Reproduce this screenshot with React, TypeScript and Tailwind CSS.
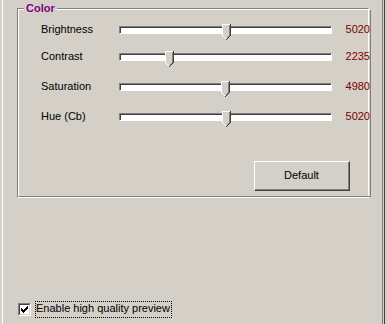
import React from "react";

const rows = [
  { label: "Brightness", value: 5020, mt: "mt-[14px]" },
  { label: "Contrast", value: 2235, mt: "mt-[11px]" },
  { label: "Saturation", value: 4980, mt: "mt-[14px]" },
  { label: "Hue (Cb)", value: 5020, mt: "mt-[14px]" },
];

function Thumb() {
  return (
    <svg width="9" height="16" viewBox="0 0 9 16" shapeRendering="crispEdges">
      <rect x="1" y="1" width="6" height="11" fill="#d4d0c8" />
      <rect x="2" y="12" width="4" height="1" fill="#d4d0c8" />
      <rect x="3" y="13" width="2" height="1" fill="#d4d0c8" />
      <rect x="0" y="0" width="8" height="1" fill="#ffffff" />
      <rect x="0" y="0" width="1" height="12" fill="#ffffff" />
      <rect x="1" y="12" width="1" height="1" fill="#ffffff" />
      <rect x="2" y="13" width="1" height="1" fill="#ffffff" />
      <rect x="3" y="14" width="1" height="1" fill="#ffffff" />
      <rect x="7" y="1" width="1" height="11" fill="#808080" />
      <rect x="6" y="12" width="1" height="1" fill="#808080" />
      <rect x="5" y="13" width="1" height="1" fill="#808080" />
      <rect x="8" y="0" width="1" height="12" fill="#404040" />
      <rect x="7" y="12" width="1" height="1" fill="#404040" />
      <rect x="6" y="13" width="1" height="1" fill="#404040" />
      <rect x="5" y="14" width="1" height="1" fill="#404040" />
      <rect x="4" y="15" width="1" height="1" fill="#404040" />
    </svg>
  );
}

function Slider({ value }: { value: number }) {
  const left = Math.round((value / 10000) * 205);
  return (
    <div className="relative w-[213px] h-[16px] shrink-0">
      <div className="mt-[2px] h-[8px] flex border-t border-l border-t-[#808080] border-l-[#808080] border-b border-r border-b-white border-r-white">
        <div className="flex-1 bg-white border-t border-l border-t-[#404040] border-l-[#404040]" />
      </div>
      <div className="absolute top-0" style={{ left }}>
        <Thumb />
      </div>
    </div>
  );
}

export default function App() {
  return (
    <div className="w-[387px] h-[324px] bg-[#d4d0c8] flex text-[11px] text-black font-['Liberation_Sans',Arial,sans-serif] overflow-hidden">
      <div className="ml-[2px] mr-[2px] flex-1 flex border-l border-white">
        <div className="flex-1 flex flex-col border-r border-[#808080] mr-px">
          <div className="relative ml-[14px] mt-[8px] w-[352px] h-[190px] shrink-0 flex border-t border-l border-t-[#808080] border-l-[#808080] border-b border-r border-b-white border-r-white">
            <div className="flex-1 flex flex-col border-t border-l border-t-white border-l-white border-b border-r border-b-[#808080] border-r-[#808080]">
              {rows.map((r) => (
                <div key={r.label} className={`${r.mt} flex items-start h-[16px] pl-[22px]`}>
                  <div className="w-[78px] shrink-0 -mt-[1px] leading-[13px] whitespace-nowrap">{r.label}</div>
                  <Slider value={r.value} />
                  <div className="w-[38px] shrink-0 -mt-[1px] leading-[13px] text-right text-[#800000]">{r.value}</div>
                </div>
              ))}
              <div className="mt-[34px] self-end mr-[20px] w-[96px] h-[30px] flex border-t border-l border-t-white border-l-white border-b border-r border-b-[#404040] border-r-[#404040]">
                <div className="flex-1 flex items-center justify-center border-b border-r border-b-[#808080] border-r-[#808080]">
                  Default
                </div>
              </div>
            </div>
            <div className="absolute left-[6px] -top-[7px] px-[2px] bg-[#d4d0c8] leading-[13px] font-bold text-[#800080]">
              Color
            </div>
          </div>

          <div className="mt-[103px] ml-[15px] flex items-center h-[17px]">
            <div className="w-[13px] h-[13px] shrink-0 flex border-t border-l border-t-[#808080] border-l-[#808080] border-b border-r border-b-white border-r-white">
              <div className="flex-1 bg-white border-t border-l border-t-[#404040] border-l-[#404040] border-b border-r border-b-[#d4d0c8] border-r-[#d4d0c8] flex items-center justify-center">
                <svg width="7" height="7" viewBox="0 0 7 7" shapeRendering="crispEdges">
                  <rect x="0" y="2" width="1" height="3" fill="#000" />
                  <rect x="1" y="3" width="1" height="3" fill="#000" />
                  <rect x="2" y="4" width="1" height="3" fill="#000" />
                  <rect x="3" y="3" width="1" height="3" fill="#000" />
                  <rect x="4" y="2" width="1" height="3" fill="#000" />
                  <rect x="5" y="1" width="1" height="3" fill="#000" />
                  <rect x="6" y="0" width="1" height="3" fill="#000" />
                </svg>
              </div>
            </div>
            <div className="ml-[4px] border border-dotted border-black leading-[13px] pb-[2px] pr-[1px] whitespace-nowrap">
              Enable high quality preview
            </div>
          </div>
        </div>
        <div className="w-px bg-[#404040]" />
      </div>
    </div>
  );
}
